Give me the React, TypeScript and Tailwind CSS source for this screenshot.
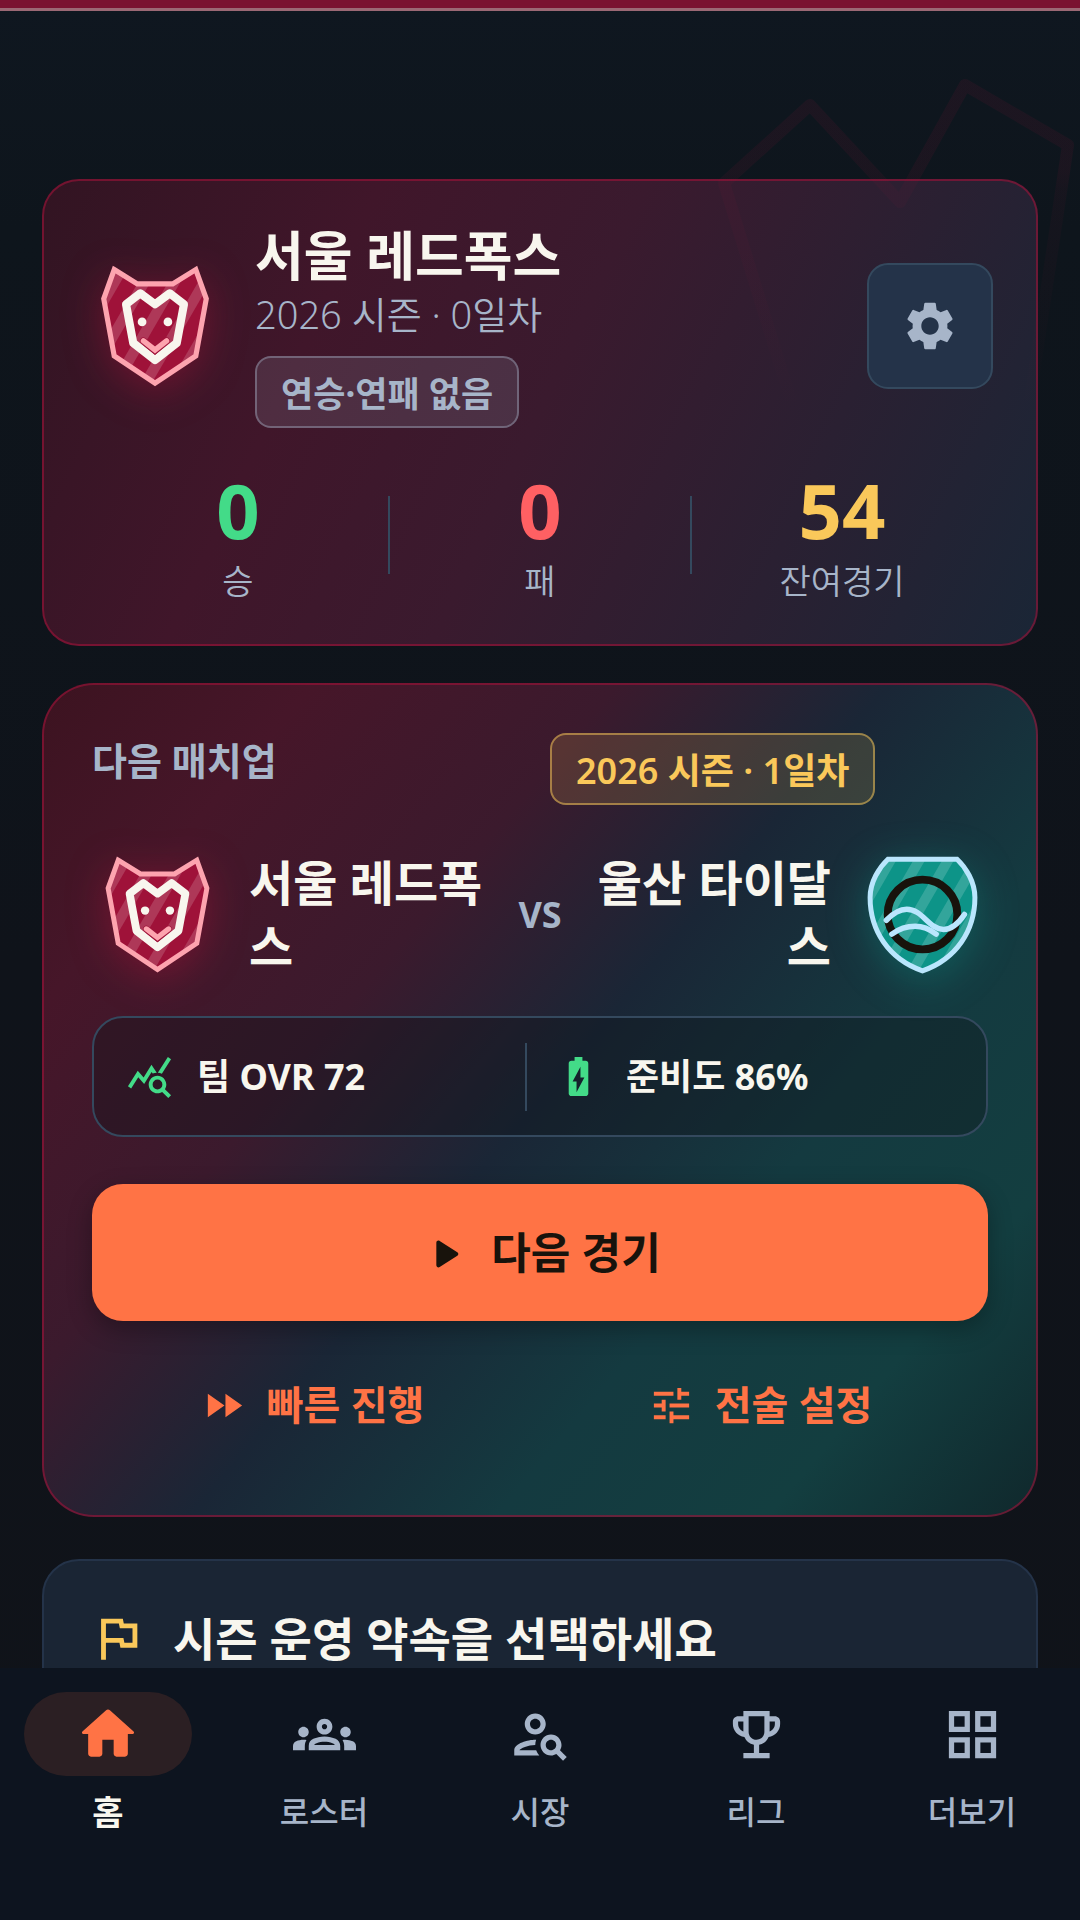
import React from "react";
import {
  MdBatteryChargingFull,
  MdFastForward,
  MdOutlineEmojiEvents,
  MdOutlineFlag,
  MdOutlineGridView,
  MdOutlineGroups,
  MdOutlinePersonSearch,
  MdQueryStats,
  MdSettings,
  MdTune,
} from "react-icons/md";

type IconProps = { className?: string };

const HomeIcon = ({ className }: IconProps) => (
  <svg viewBox="0 0 24 24" fill="currentColor" className={className} aria-hidden="true">
    <path d="M10 19v-5h4v5c0 .55.45 1 1 1h3c.55 0 1-.45 1-1v-7h1.7c.46 0 .68-.57.33-.87L12.67 3.6c-.38-.34-.96-.34-1.34 0l-8.36 7.53c-.34.3-.13.87.33.87H5v7c0 .55.45 1 1 1h3c.55 0 1-.45 1-1z" />
  </svg>
);

const PlayIcon = ({ className }: IconProps) => (
  <svg viewBox="0 0 24 24" fill="currentColor" className={className} aria-hidden="true">
    <path d="M8 6.82v10.36c0 .79.87 1.27 1.54.84l8.14-5.18c.62-.39.62-1.29 0-1.69L9.54 5.98C8.87 5.55 8 6.03 8 6.82z" />
  </svg>
);

// Diagonal light bands shared by both crests
const Stripes = () => (
  <g fill="#ffffff" fillOpacity="0.16">
    {[-18, 4, 26, 48, 70, 92, 114].map((x) => (
      <polygon key={x} points={`${x},0 ${x + 9},0 ${x - 49},100 ${x - 58},100`} />
    ))}
  </g>
);

const FOX_OUTLINE = "M20 8.5 37 19H63L80 8.5 87.7 30 80 72 50 92 20 72 12.3 30Z";
const TIDE_OUTLINE = "M23.6 7.8H76.4C83 14 90 25 90 37C90 62 76 84 50 93C24 84 10 62 10 37C10 25 17 14 23.6 7.8Z";

const FoxCrest = ({ className }: IconProps) => (
  <svg
    viewBox="0 0 100 100"
    className={`overflow-visible drop-shadow-[0_8px_20px_rgba(190,18,60,0.4)] ${className}`}
    role="img"
    aria-label="서울 레드폭스"
  >
    <clipPath id="fox-clip">
      <path d={FOX_OUTLINE} />
    </clipPath>
    <path d={FOX_OUTLINE} fill="#9f1239" />
    <g clipPath="url(#fox-clip)">
      <Stripes />
    </g>
    <path d={FOX_OUTLINE} fill="none" stroke="#fda4af" strokeWidth="3.8" />
    <path
      d="M50 34 39.2 26 28.7 34 34 62.5 50 75 66 62.5 71.3 34 60.8 26Z"
      fill="none"
      stroke="#f8f6ee"
      strokeWidth="6"
      strokeLinejoin="round"
    />
    <circle cx="40.5" cy="47" r="3.2" fill="#f8f6ee" />
    <circle cx="59.5" cy="47" r="3.2" fill="#f8f6ee" />
    <path d="M41.5 61 50 68 58.5 61" fill="none" stroke="#9f1239" strokeWidth="5" strokeLinecap="round" />
    <path d="M41.5 61 50 67.6 58.5 61" fill="none" stroke="#fda4af" strokeWidth="4" strokeLinecap="round" />
  </svg>
);

const TideCrest = ({ className }: IconProps) => (
  <svg
    viewBox="0 0 100 100"
    className={`overflow-visible drop-shadow-[0_8px_20px_rgba(13,148,136,0.4)] ${className}`}
    role="img"
    aria-label="울산 타이달스"
  >
    <clipPath id="tide-clip">
      <path d={TIDE_OUTLINE} />
    </clipPath>
    <path d={TIDE_OUTLINE} fill="#0d9488" />
    <g clipPath="url(#tide-clip)">
      <Stripes />
    </g>
    <path d={TIDE_OUTLINE} fill="none" stroke="#bae6fd" strokeWidth="3.8" />
    <circle cx="50" cy="50" r="26.6" fill="none" stroke="#18130c" strokeWidth="6" />
    <g fill="none" stroke="#bae6fd" strokeWidth="4.2" strokeLinecap="round">
      <path d="M22.4 54.4C28 48.5 33 46 38 46C50 46 55 61.4 66 61.4C73 61.4 78 56 82 50" />
      <path d="M26.6 65C32 61 38 59 44.4 59C51 59 56 61.6 60.4 65" />
    </g>
  </svg>
);

// Oversized fox mask that fades out over the team card
const Watermark = () => (
  <svg
    viewBox="0 0 380 460"
    className="pointer-events-none absolute top-[70px] right-0 w-[380px]"
    fill="none"
    stroke="url(#watermark-fade)"
    strokeWidth="12"
    strokeLinejoin="round"
    aria-hidden="true"
  >
    <linearGradient id="watermark-fade" gradientUnits="userSpaceOnUse" x1="0" y1="0" x2="0" y2="340">
      <stop offset="0" stopColor="#9f1239" stopOpacity="0.1" />
      <stop offset="0.3" stopColor="#9f1239" stopOpacity="0.09" />
      <stop offset="0.35" stopColor="#9f1239" stopOpacity="0.06" />
      <stop offset="1" stopColor="#9f1239" stopOpacity="0" />
    </linearGradient>
    <path d="M24 113 110 35 200 132 265 15 368 75 330 330 225 440 100 360Z" />
  </svg>
);

const STATS = [
  { label: "승", value: 0, color: "text-[#43db88]" },
  { label: "패", value: 0, color: "text-[#ff6063]" },
  { label: "잔여경기", value: 54, color: "text-[#fac85a]" },
];

const NAV_ITEMS = [
  { label: "홈", icon: HomeIcon },
  { label: "로스터", icon: MdOutlineGroups },
  { label: "시장", icon: MdOutlinePersonSearch },
  { label: "리그", icon: MdOutlineEmojiEvents },
  { label: "더보기", icon: MdOutlineGridView },
];

function TeamCard() {
  return (
    <section className="rounded-[37px] border-2 border-[#9f1239]/60 bg-[linear-gradient(115deg,#321422_0%,#40162a_28%,#3a1a2e_50%,#1a2636_100%)] bg-origin-border px-[43px] py-[42px]">
      <div className="flex items-center">
        <FoxCrest className="size-[136px] shrink-0" />
        <div className="ml-8 min-w-0 flex-1">
          <h1 className="text-[53px] leading-[65px] font-bold">서울 레드폭스</h1>
          <p className="text-[38px] leading-[52px] font-[350] text-[#a7b5c9]">2026 시즌 · 0일차</p>
          <span className="mt-4 inline-flex h-[72px] items-center rounded-2xl border-2 border-[#a7b5c9]/40 bg-[#a7b5c9]/15 px-6 pt-1 text-[35px] font-bold text-[#a7b5c9]">
            연승·연패 없음
          </span>
        </div>
        <button
          type="button"
          aria-label="설정"
          className="flex size-[126px] shrink-0 items-center justify-center rounded-[21px] border-2 border-[#34495e] bg-[#243349] text-[#a7b5c9]"
        >
          <MdSettings className="size-[58px]" />
        </button>
      </div>

      <dl className="mt-8 grid grid-cols-3">
        {STATS.map((stat, i) => (
          <div key={stat.label} className="relative flex flex-col-reverse items-center">
            <dt className="text-[34px] leading-[42px] font-[350] text-[#a7b5c9]">{stat.label}</dt>
            <dd className={`text-[76px] leading-[100px] font-bold ${stat.color}`}>{stat.value}</dd>
            {i > 0 && <span className="absolute top-9 -left-px h-[78px] w-[2px] bg-[#34495e]" />}
          </div>
        ))}
      </dl>
    </section>
  );
}

function MatchupCard() {
  return (
    <section className="mt-[37px] rounded-[52px] border-2 border-[#9f1239]/60 bg-[linear-gradient(130deg,#3c1320_0%,#461629_16%,#3b1a2d_34%,#1a2636_50%,#143a40_68%,#133e40_84%,#10282c_100%)] bg-origin-border p-12">
      <div className="grid grid-cols-2 items-start gap-5">
        <h2 className="text-[38px] leading-[54px] font-bold text-[#a7b5c9]">다음 매치업</h2>
        <span className="inline-flex h-[72px] items-center justify-self-start rounded-2xl border-2 border-[#fac85a]/50 bg-[#fac85a]/15 px-6 pt-1 text-[36px] font-semibold whitespace-nowrap text-[#fac85a]">
          2026 시즌 · 1일차
        </span>
      </div>

      <div className="mt-11 flex items-center text-[48px] leading-[64px] font-bold">
        <FoxCrest className="size-[131px] shrink-0" />
        <p className="ml-[26px] flex-1">서울 레드폭스</p>
        <span className="mx-5 text-[36px] leading-[52px] text-[#a7b5c9]">VS</span>
        <p className="mr-[26px] flex-1 text-right">울산 타이달스</p>
        <TideCrest className="size-[131px] shrink-0" />
      </div>

      <div className="mt-9 flex h-[121px] items-center rounded-[31px] border-2 border-[#34495e] bg-[#0f131b]/35 px-8 text-[36px] font-bold">
        <div className="flex flex-1 items-center gap-6">
          <MdQueryStats className="size-[47px] text-[#43db88]" />
          팀 OVR 72
        </div>
        <span className="mr-7 h-[68px] w-[2px] bg-[#34495e]" />
        <div className="flex flex-1 items-center gap-6">
          <MdBatteryChargingFull className="size-[47px] text-[#43db88]" />
          준비도 86%
        </div>
      </div>

      <button
        type="button"
        className="mt-[47px] flex h-[137px] w-full items-center justify-center gap-5 rounded-[31px] bg-[#ff7345] pt-0.5 text-[43px] font-bold text-[#18130c] shadow-[0_8px_24px_rgba(0,0,0,0.3)]"
      >
        <PlayIcon className="size-[52px]" />
        다음 경기
      </button>

      <div className="mt-5 grid grid-cols-2 text-[40px] font-bold text-[#ff7345]">
        <button type="button" className="flex h-[126px] items-center justify-center gap-5 pt-0.5 pr-2">
          <MdFastForward className="size-[47px]" />
          빠른 진행
        </button>
        <button type="button" className="flex h-[126px] items-center justify-center gap-5 pt-0.5 pr-2">
          <MdTune className="size-[47px]" />
          전술 설정
        </button>
      </div>
    </section>
  );
}

function PromiseCard() {
  return (
    <section className="mt-[42px] rounded-[37px] border-2 border-[#243349] bg-[#1a2534] px-[45px] pt-[47px] pb-12">
      <h2 className="flex items-center gap-[26px] text-[46px] leading-[60px] font-bold">
        <MdOutlineFlag className="size-[58px] shrink-0 text-[#fac85a]" />
        시즌 운영 약속을 선택하세요
      </h2>
    </section>
  );
}

export default function App() {
  const [active, setActive] = React.useState("홈");

  return (
    <div className="relative flex h-screen flex-col overflow-hidden bg-[linear-gradient(180deg,#0f1720_0%,#0e151c_12%,#0f131a_50%,#101319_100%)] font-['Noto_Sans','Noto_Sans_CJK_KR',sans-serif] text-[#f8f6ee]">
      <div className="h-[11px] shrink-0 border-b-3 border-[#9b6874] bg-[#7a1230]" />

      <main className="relative min-h-0 flex-1 overflow-y-auto px-[42px] pt-[168px] [scrollbar-width:none]">
        <TeamCard />
        <MatchupCard />
        <PromiseCard />
      </main>
      <Watermark />

      <nav className="relative grid h-[252px] shrink-0 grid-cols-5 bg-[#0d141f] pt-6">
        {NAV_ITEMS.map(({ label, icon: Icon }) => {
          const selected = label === active;
          return (
            <button
              key={label}
              type="button"
              onClick={() => setActive(label)}
              aria-current={selected ? "page" : undefined}
              className="flex flex-col items-center"
            >
              <span
                className={`flex h-[84px] w-[168px] items-center justify-center rounded-full ${
                  selected ? "bg-[#2b1f23] text-[#ff7345]" : "text-[#a7b5c9]"
                }`}
              >
                <Icon className={selected ? "size-[68px]" : "size-[63px]"} />
              </span>
              <span
                className={`mt-3 leading-[48px] ${
                  selected ? "text-[34px] font-bold" : "text-[32px] font-medium text-[#a7b5c9]"
                }`}
              >
                {label}
              </span>
            </button>
          );
        })}
      </nav>
    </div>
  );
}
